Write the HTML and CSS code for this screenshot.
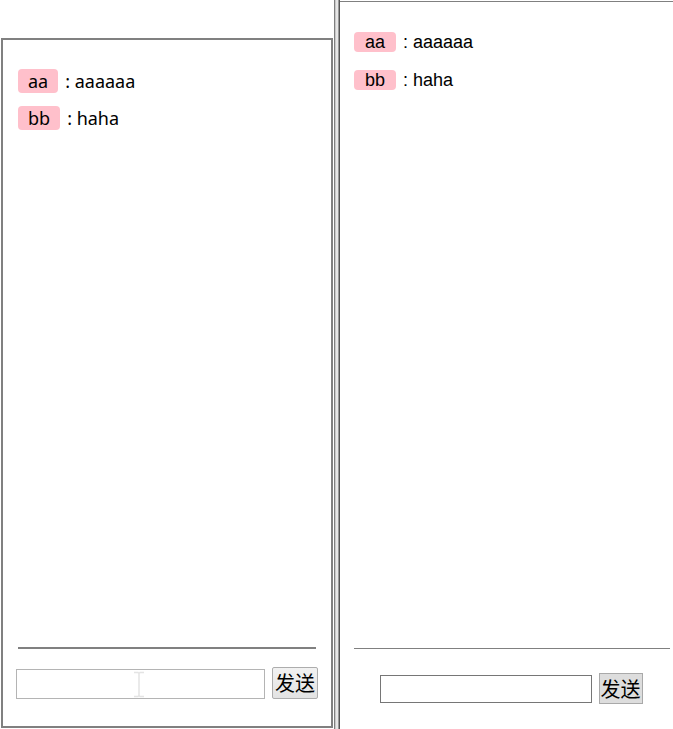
FILE: index.html
```html
<!DOCTYPE html>
<html lang="zh-CN">
<head>
    <meta charset="UTF-8">
    <meta name="viewport" content="width=device-width, initial-scale=1.0">
    <title>聊天室</title>
    <link rel="stylesheet" href="styles.css">
</head>
<body>
    <!-- Left window -->
    <div class="pane-left">
        <div class="chat-box">
            <div class="messages">
                <div class="msg"><span class="name">aa</span><span class="text">: aaaaaa</span></div>
                <div class="msg"><span class="name">bb</span><span class="text">: haha</span></div>
            </div>
            <div class="chat-footer">
                <div class="line"></div>
                <form class="send-form">
                    <input type="text" class="msg-input">
                    <button type="button" class="send-btn">发送</button>
                    <svg class="cursor" width="14" height="27" viewBox="0 0 14 27">
                        <path d="M2 1.5h4l1 1 1-1h4M7 2.5v22M2 25.5h4l1-1 1 1h4" fill="none" stroke="#e4e4e4" stroke-width="1.5"/>
                    </svg>
                </form>
            </div>
        </div>
    </div>

    <div class="splitter"></div>

    <!-- Right window -->
    <div class="pane-right">
        <div class="messages">
            <div class="msg"><span class="name">aa</span><span class="text">: aaaaaa</span></div>
            <div class="msg"><span class="name">bb</span><span class="text">: haha</span></div>
        </div>
        <div class="chat-footer">
            <div class="line"></div>
            <form class="send-form">
                <input type="text" class="msg-input">
                <button type="button" class="send-btn">发送</button>
            </form>
        </div>
    </div>
</body>
</html>
```

FILE: styles.css
```css
body {
    margin: 0;
    padding: 0;
    display: flex;
    height: 729px;
    overflow: hidden;
    background: white;
    color: black;
}

/* ---------- left window ---------- */
.pane-left {
    width: 333px;
    padding: 38px 0 1px 1px;
    box-sizing: border-box;
    display: flex;
    font-family: 'Noto Sans', 'Noto Sans CJK SC', sans-serif;
}

.chat-box {
    flex: 1;
    border: 2px solid #808080;
    display: flex;
    flex-direction: column;
}

.pane-left .messages {
    flex: 1;
    padding: 22px 15px 0;
}

.pane-left .msg {
    display: flex;
    align-items: center;
    height: 37px;
    font-size: 18px;
}

.pane-left .name {
    background-color: pink;
    border-radius: 4px;
    padding: 0 10px;
    line-height: 24px;
}

.pane-left .text {
    margin-left: 7px;
}

.pane-left .line {
    height: 2px;
    background: #808080;
    margin: 0 15px;
}

.pane-left .send-form {
    position: relative;
    display: flex;
    align-items: flex-end;
    gap: 7px;
    margin: 18px 13px 27px;
}

.pane-left .msg-input {
    width: 249px;
    height: 30px;
    box-sizing: border-box;
    border: 1px solid #b4b4b4;
    margin: 0;
}

.pane-left .send-btn {
    width: 46px;
    height: 32px;
    padding: 0;
    border: 1px solid #adadad;
    border-radius: 2px;
    background: linear-gradient(#f2f2f2, #e3e3e3);
    font-family: 'Noto Sans CJK SC', sans-serif;
    font-size: 20px;
    line-height: 30px;
}

.cursor {
    position: absolute;
    left: 116px;
    top: 4px;
}

/* ---------- splitter ---------- */
.splitter {
    width: 7px;
    background: linear-gradient(to right, #fff 0, #fff 1px, #7f7f7f 1px, #7f7f7f 2px,
        #c8c8c8 2px, #c8c8c8 3px, #e6e6e6 3px, #e6e6e6 5px, #9a9a9a 5px, #9a9a9a 6px, #555 6px);
}

/* ---------- right window ---------- */
.pane-right {
    flex: 1;
    margin-top: 1px;
    border-top: 1px solid #808080;
    display: flex;
    flex-direction: column;
    font-family: 'Liberation Sans', Arial, sans-serif;
}

.pane-right .messages {
    flex: 1;
    padding: 21px 14px 0;
}

.pane-right .msg {
    display: flex;
    align-items: center;
    height: 38px;
    font-size: 18px;
}

.pane-right .name {
    background-color: pink;
    border-radius: 4px;
    padding: 0 11px;
    line-height: 20px;
}

.pane-right .text {
    margin-left: 7px;
}

.pane-right .line {
    height: 1px;
    background: #808080;
    margin: 0 3px 0 14px;
}

.pane-right .send-form {
    display: flex;
    align-items: center;
    justify-content: center;
    gap: 7px;
    margin: 24px 4px 25px 13px;
    height: 31px;
}

.pane-right .msg-input {
    width: 212px;
    height: 28px;
    box-sizing: border-box;
    border: 1px solid #767676;
    margin: 0;
}

.pane-right .send-btn {
    width: 44px;
    height: 31px;
    padding: 0;
    border: 1px solid #a9a9a9;
    background: #dddddd;
    font-family: 'Noto Sans CJK SC', sans-serif;
    font-size: 20px;
    line-height: 29px;
}
```
